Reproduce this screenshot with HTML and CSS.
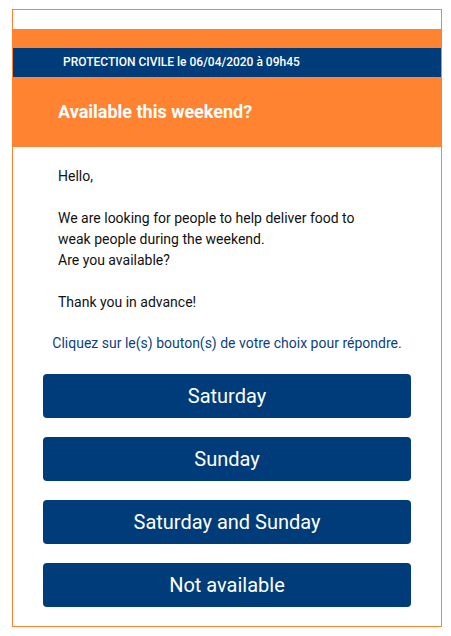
FILE: index.html
```html
<!DOCTYPE html>
<html>
<head>
<meta charset="utf-8">
<link rel="stylesheet" href="styles.css">
</head>
<body>
<div class="card">
  <div class="top-space"></div>
  <div class="header">
    <div class="meta">PROTECTION CIVILE le 06/04/2020 à 09h45</div>
    <div class="title">Available this weekend?</div>
  </div>
  <div class="content">
    <p class="message">Hello,<br><br>We are looking for people to help deliver food to<br>weak people during the weekend.<br>Are you available?<br><br>Thank you in advance!</p>
    <p class="hint">Cliquez sur le(s) bouton(s) de votre choix pour répondre.</p>
    <div class="buttons">
      <a class="btn">Saturday</a>
      <a class="btn">Sunday</a>
      <a class="btn">Saturday and Sunday</a>
      <a class="btn">Not available</a>
    </div>
  </div>
</div>
</body>
</html>
```
FILE: styles.css
```css
* { box-sizing: border-box; }
html, body { margin: 0; padding: 0; background: #fff; }
body { font-family: Roboto, "Liberation Sans", Arial, sans-serif; }
.card {
  margin: 9px 0 0 12px;
  width: 430px;
  border: 1px solid #ff8330;
}
.top-space { height: 19px; }
.header {
  background: #ff8330;
  padding-top: 19px;
}
.meta {
  background: #003b7a;
  color: #fff;
  height: 29px;
  line-height: 29px;
  font-size: 12px;
  font-weight: 500;
  padding-left: 50px;
}
.title {
  height: 70px;
  line-height: 70px;
  color: #fff;
  font-size: 18px;
  font-weight: 700;
  padding-left: 45px;
}
.content {
  padding: 19px 30px 19px 30px;
}
.message {
  margin: 0;
  padding-left: 15px;
  font-size: 14px;
  line-height: 21px;
  color: #111;
}
.hint {
  margin: 20px 0 0;
  text-align: center;
  font-size: 14px;
  line-height: 21px;
  color: #0d3f7e;
}
.buttons {
  margin-top: 20px;
  display: flex;
  flex-direction: column;
  gap: 19px;
}
.btn {
  display: block;
  height: 44px;
  line-height: 44px;
  background: #003b7a;
  color: #fff;
  border-radius: 4px;
  text-align: center;
  font-size: 20px;
  text-decoration: none;
}
```
